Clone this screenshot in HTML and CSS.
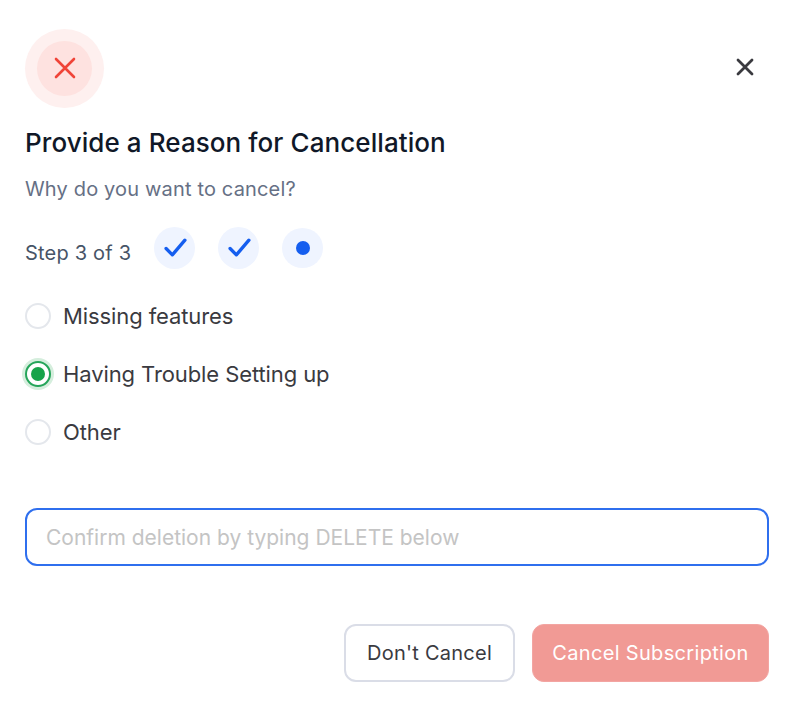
FILE: index.html
```html
<!DOCTYPE html>
<html lang="en">
<head>
<meta charset="utf-8">
<title>Cancel subscription</title>
<link rel="stylesheet" href="styles.css">
</head>
<body>
<main class="dialog">
  <header class="top">
    <div class="halo">
      <div class="halo-inner">
        <svg class="x-red" viewBox="0 0 22 22" fill="none" stroke="#f04438" stroke-width="2.6" stroke-linecap="round"><path d="M2 2L20 20M20 2L2 20"/></svg>
      </div>
    </div>
    <button class="close" type="button" aria-label="Close">
      <svg viewBox="0 0 20 20" fill="none" stroke="#3a3a3f" stroke-width="2.8" stroke-linecap="round"><path d="M3 3L17 17M17 3L3 17"/></svg>
    </button>
  </header>
  <h1 class="title">Provide a Reason for Cancellation</h1>
  <p class="sub">Why do you want to cancel?</p>
  <div class="steps">
    <span class="step-label">Step 3 of 3</span>
    <span class="step"><svg viewBox="0 0 22 18" fill="none" stroke="#155eef" stroke-width="3.2" stroke-linecap="round" stroke-linejoin="round"><path d="M2 10L8 16L20 2"/></svg></span>
    <span class="step"><svg viewBox="0 0 22 18" fill="none" stroke="#155eef" stroke-width="3.2" stroke-linecap="round" stroke-linejoin="round"><path d="M2 10L8 16L20 2"/></svg></span>
    <span class="step step-current"><span class="dot"></span></span>
  </div>
  <div class="options">
    <label class="option"><span class="radio"></span>Missing features</label>
    <label class="option"><span class="radio radio-on"><span class="radio-dot"></span></span>Having Trouble Setting up</label>
    <label class="option"><span class="radio"></span>Other</label>
  </div>
  <input class="field" type="text" placeholder="Confirm deletion by typing DELETE below">
  <div class="actions">
    <button class="btn btn-ghost" type="button">Don't Cancel</button>
    <button class="btn btn-danger" type="button">Cancel Subscription</button>
  </div>
</main>
</body>
</html>
```
FILE: styles.css
```css
* { box-sizing: border-box; }
html, body { margin: 0; background: #fff; }
body { font-family: Inter, "Liberation Sans", sans-serif; overflow: hidden; }
.dialog { width: 793px; height: 708px; padding: 29px 24px 0 25px; display: flex; flex-direction: column; }
.top { display: flex; justify-content: space-between; align-items: center; height: 79px; }
.halo { width: 79px; height: 79px; border-radius: 50%; background: #fef0ef; display: flex; align-items: center; justify-content: center; flex: none; }
.halo-inner { width: 55px; height: 55px; border-radius: 50%; background: #fee2e0; display: flex; align-items: center; justify-content: center; }
.x-red { width: 22px; height: 22px; margin: 0 0 1px; }
.close { width: 20px; height: 20px; padding: 0; margin: 0 14px 4px 0; border: 0; background: none; display: block; }
.close svg { display: block; width: 20px; height: 20px; }
.title { margin: 17px 0 0; font-size: 26px; line-height: 36px; font-weight: 500; color: #101828; letter-spacing: 0.08px; }
.sub { margin: 16px 0 0; font-size: 20px; line-height: 24px; color: #667085; letter-spacing: 0.16px; }
.steps { display: flex; align-items: center; margin-top: 26px; height: 42px; }
.step-label { font-size: 20px; line-height: 24px; color: #475467; margin: 10px 23px 0 0; width: 106px; white-space: nowrap; letter-spacing: 0.2px; }
.step { width: 41px; height: 42px; border-radius: 50%; background: #eff4ff; display: flex; align-items: center; justify-content: center; margin-right: 23px; }
.step svg { width: 23px; height: 19px; margin: 0 0 2px 2px; }
.step-current { height: 40px; }
.dot { width: 14px; height: 14px; border-radius: 50%; background: #155eef; }
.options { display: flex; flex-direction: column; gap: 28px; margin-top: 32px; }
.option { display: flex; align-items: center; gap: 12px; height: 30px; font-size: 22px; color: #3a3a3f; letter-spacing: -0.1px; }
.radio { width: 26px; height: 26px; border-radius: 50%; border: 2px solid #e4e7ec; background: #fff; flex: none; display: flex; align-items: center; justify-content: center; }
.radio-on { border-color: #25a55a; box-shadow: 0 0 0 3px #d5eedd; }
.radio-dot { width: 14px; height: 14px; border-radius: 50%; background: #16a34a; }
.field { width: 744px; height: 58px; margin-top: 61px; padding: 0 19px; border: 2px solid #2f6fee; border-radius: 12px; font: 400 21px Inter, "Liberation Sans", sans-serif; color: #344054; outline: none; background: #fff; }
.field::placeholder { color: #c4c4c4; opacity: 1; }
.actions { display: flex; justify-content: flex-end; gap: 17px; margin-top: 58px; }
.btn { height: 58px; border-radius: 12px; font: 400 20px Inter, "Liberation Sans", sans-serif; padding: 0; letter-spacing: 0.25px; }
.btn-ghost { width: 171px; background: #fff; border: 2px solid #dadde7; color: #3a3a3f; }
.btn-danger { width: 237px; background: #f19a95; border: 1px solid #f3a5a2; color: #fff; letter-spacing: 0.33px; }
```
